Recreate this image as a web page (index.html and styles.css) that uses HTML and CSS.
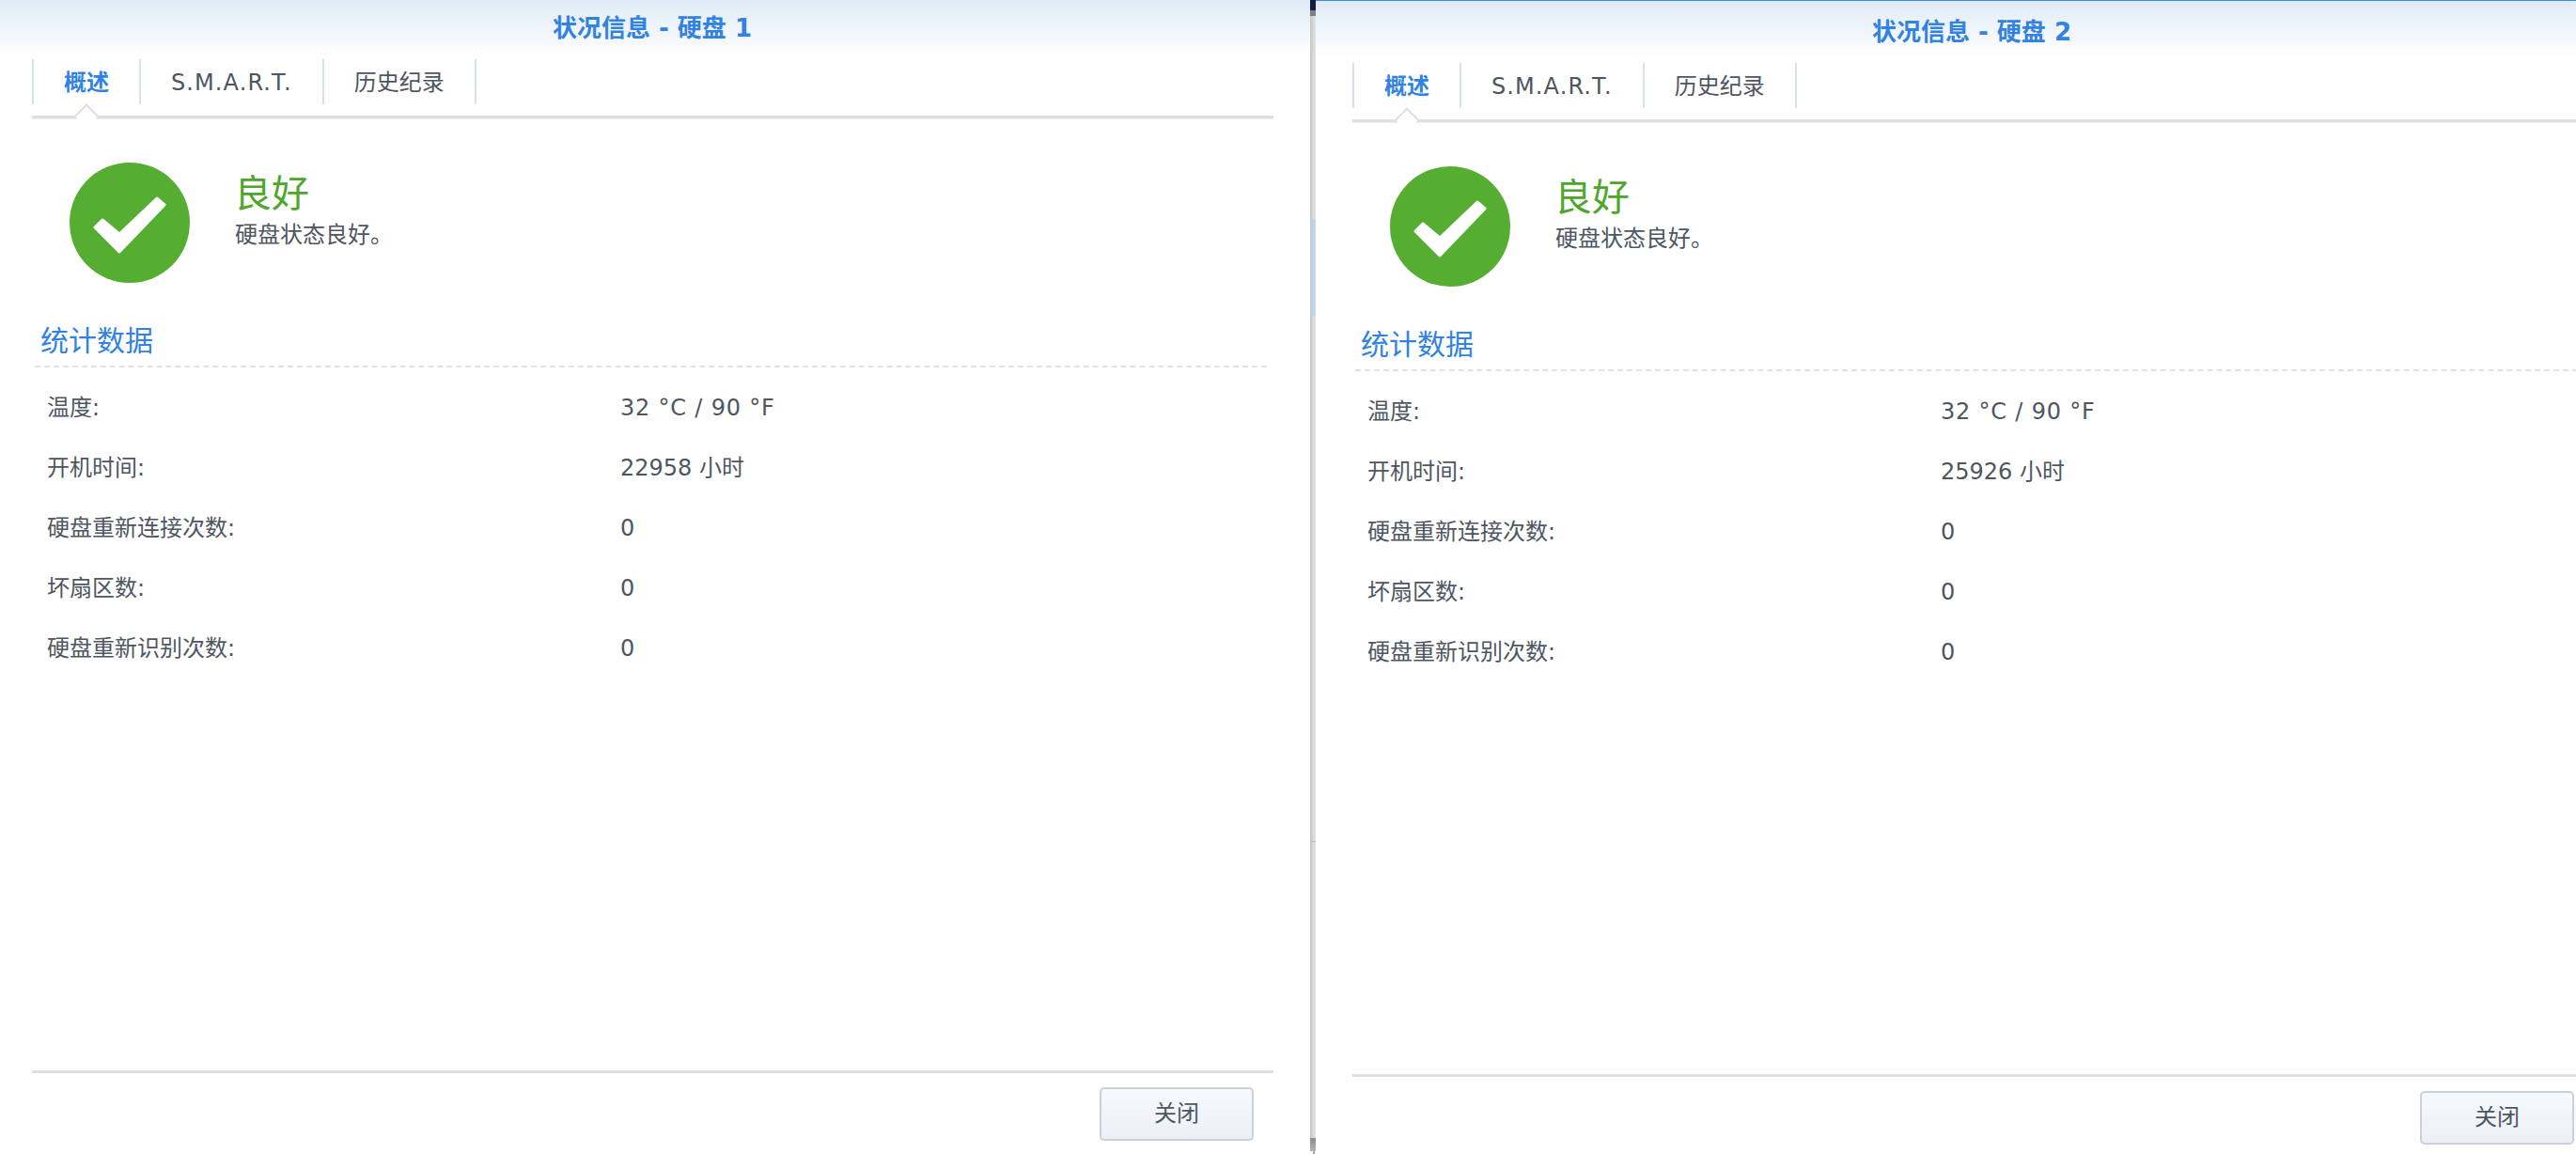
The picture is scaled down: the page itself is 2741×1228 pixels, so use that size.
FILE: index.html
```html
<!DOCTYPE html>
<html lang="zh-CN">
<head>
  <meta charset="UTF-8">
  <title>状况信息</title>
  <link rel="stylesheet" href="styles.css">
</head>
<body>
<section class="panel">
  <h1 class="panel-title">状况信息 - 硬盘 1</h1>
  <div class="panel-inner">
    <nav class="tabs">
      <a class="tab active">概述</a>
      <a class="tab latin-tab">S.M.A.R.T.</a>
      <a class="tab">历史纪录</a>
    </nav>
    <div class="status">
      <svg class="status-icon" viewBox="0 0 128 128">
        <circle cx="64" cy="64" r="64" fill="#55ae31"/>
        <polygon points="27,69 35,61 53,76 93,38 101,45 53,95" fill="#fff" stroke="#fff" stroke-width="3" stroke-linejoin="round"/>
      </svg>
      <div>
        <div class="status-title">良好</div>
        <div class="status-text">硬盘状态良好。</div>
      </div>
    </div>
    <h2 class="section-title">统计数据</h2>
    <div class="stats">
      <div class="stat"><span class="stat-label">温度:</span><span class="latin">32 °C / 90 °F</span></div>
      <div class="stat"><span class="stat-label">开机时间:</span><span>22958 小时</span></div>
      <div class="stat"><span class="stat-label">硬盘重新连接次数:</span><span>0</span></div>
      <div class="stat"><span class="stat-label">坏扇区数:</span><span>0</span></div>
      <div class="stat"><span class="stat-label">硬盘重新识别次数:</span><span>0</span></div>
    </div>
    <div class="footer">
      <a class="button">关闭</a>
    </div>
  </div>
</section>

<div class="divider">
  <i class="seg-navy"></i>
  <i class="seg-gray"></i>
  <i class="seg-track h1"></i>
  <i class="seg-blue"></i>
  <i class="seg-track h2"></i>
  <i class="seg-tick"></i>
  <i class="seg-track h3"></i>
  <i class="seg-end"></i>
  <i class="seg-stub"></i>
</div>

<section class="panel second">
  <h1 class="panel-title">状况信息 - 硬盘 2</h1>
  <div class="panel-inner">
    <nav class="tabs">
      <a class="tab active">概述</a>
      <a class="tab latin-tab">S.M.A.R.T.</a>
      <a class="tab">历史纪录</a>
    </nav>
    <div class="status">
      <svg class="status-icon" viewBox="0 0 128 128">
        <circle cx="64" cy="64" r="64" fill="#55ae31"/>
        <polygon points="27,69 35,61 53,76 93,38 101,45 53,95" fill="#fff" stroke="#fff" stroke-width="3" stroke-linejoin="round"/>
      </svg>
      <div>
        <div class="status-title">良好</div>
        <div class="status-text">硬盘状态良好。</div>
      </div>
    </div>
    <h2 class="section-title">统计数据</h2>
    <div class="stats">
      <div class="stat"><span class="stat-label">温度:</span><span class="latin">32 °C / 90 °F</span></div>
      <div class="stat"><span class="stat-label">开机时间:</span><span>25926 小时</span></div>
      <div class="stat"><span class="stat-label">硬盘重新连接次数:</span><span>0</span></div>
      <div class="stat"><span class="stat-label">坏扇区数:</span><span>0</span></div>
      <div class="stat"><span class="stat-label">硬盘重新识别次数:</span><span>0</span></div>
    </div>
    <div class="footer">
      <a class="button">关闭</a>
    </div>
  </div>
</section>
</body>
</html>
```

FILE: styles.css
```css
html, body {
  height: 100%;
}

body {
  margin: 0;
  display: flex;
  overflow: hidden;
  background-color: #fff;
  color: #4e5661;
  font-family: "DejaVu Sans", "Noto Sans CJK SC", sans-serif;
  font-size: 24px;
}

.panel {
  flex: 0 0 1394px;
  width: 1394px;
  height: 1228px;
  display: flex;
  flex-direction: column;
  background: linear-gradient(#dfebf7, #fff 60px) no-repeat;
}

.second {
  flex: 0 0 1399px;
  width: 1399px;
  border-top: 1px solid #3d8be6;
  box-sizing: border-box;
  padding-top: 3px;
}

.panel-title {
  margin: 0;
  height: 60px;
  line-height: 60px;
  padding-right: 6px;
  text-align: center;
  color: #3182e2;
  font-size: 26px;
  font-weight: bold;
}

.second .panel-title {
  padding-left: 5px;
  padding-right: 8px;
}

.panel-inner {
  flex: 1;
  display: flex;
  flex-direction: column;
  margin: 3px 39px 14px 34px;
}

.second .panel-inner {
  margin: 3px 0 10px 39px;
  padding-right: 39px;
}

.tabs {
  display: flex;
  padding-bottom: 12px;
  border-bottom: 3px solid #dedfe0;
  box-shadow: 0 1px 1px #f1f1f1;
}

.tab {
  position: relative;
  display: block;
  height: 48px;
  line-height: 50px;
  padding: 0 32px;
  border-right: 2px solid #d8e1ec;
}

.tab:first-child {
  border-left: 2px solid #d8e1ec;
}

/* digits fit, but these strings run wider than the font gives */
.latin {
  letter-spacing: 0.8px;
}

.latin-tab {
  letter-spacing: 1.1px;
}

.active {
  color: #3182e2;
  font-weight: bold;
}

/* small arrow under the selected tab */
.active::after {
  content: "";
  position: absolute;
  left: 47px;
  top: 51px;
  width: 16px;
  height: 16px;
  background-color: #fff;
  border-top: 2px solid #dedfe0;
  border-left: 2px solid #dedfe0;
  transform: rotate(45deg);
}

.status {
  display: flex;
  align-items: flex-start;
  gap: 47px;
  margin: 47px 0 0 40px;
}

.status-icon {
  width: 128px;
  height: 128px;
  flex: none;
}

.status-title {
  margin-top: 8px;
  color: #4ea72c;
  font-size: 40px;
  line-height: 50px;
}

.status-text {
  margin: 3px 0 0 1px;
  line-height: 32px;
}

.section-title {
  margin: 42px 7px 0 3px;
  padding: 0 0 6px 6px;
  color: #3182e2;
  font-size: 30px;
  font-weight: normal;
  line-height: 40px;
  border-bottom: 2px dashed #dfe3e8;
}

.stats {
  margin: 11px 0 0 16px;
}

.stat {
  display: flex;
  height: 64px;
  line-height: 64px;
}

.stat-label {
  width: 610px;
}

.footer {
  margin-top: auto;
  display: flex;
  justify-content: flex-end;
  padding: 15px 21px 0 0;
  border-top: 3px solid #dedfe0;
}

.button {
  display: block;
  width: 160px;
  height: 53px;
  line-height: 53px;
  text-align: center;
  border: 2px solid #c9d2dc;
  border-radius: 5px;
  background: linear-gradient(#f7fafd, #ebf0f5);
}

.divider {
  flex: 0 0 6px;
  display: flex;
  flex-direction: column;
}

.divider i {
  display: block;
  flex: none;
  background: linear-gradient(90deg, #c6c6c6, #e4e4e4);
}

.divider .seg-navy {
  height: 11px;
  background: #0f1f45;
}

.divider .seg-gray {
  height: 6px;
  background: #7c7f84;
}

.divider .h1 {
  height: 216px;
}

.divider .seg-blue {
  height: 103px;
  background: linear-gradient(90deg, #bccbd8, #cbd8e3);
}

.divider .h2 {
  height: 559px;
}

.divider .seg-tick {
  height: 1px;
  background: #bbb;
}

.divider .h3 {
  height: 315px;
}

.divider .seg-end {
  height: 14px;
  background: linear-gradient(#8b8b8b, #b5b5b5);
}

.divider .seg-stub {
  width: 2px;
  height: 3px;
  margin-left: 3px;
  background: #aaa;
}
```
